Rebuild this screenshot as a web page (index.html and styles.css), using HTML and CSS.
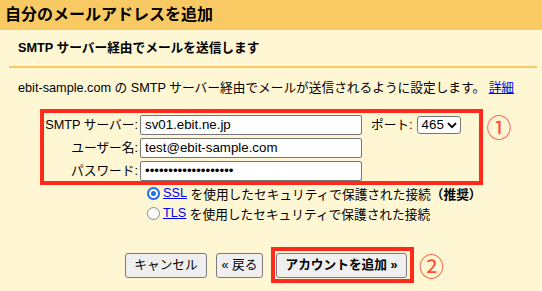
FILE: index.html
```html
<!DOCTYPE html>
<html lang="ja">
<head>
<meta charset="utf-8">
<title>自分のメールアドレスを追加</title>
<link rel="stylesheet" href="styles.css">
</head>
<body>
<header class="top"><h1 class="title">自分のメールアドレスを追加</h1></header>
<main class="panel">
  <h2 class="sub">SMTP サーバー経由でメールを送信します</h2>
  <p class="desc">ebit-sample.com の SMTP サーバー経由でメールが送信されるように設定します。 <a class="link" href="#">詳細</a></p>
  <div class="form-row">
    <div class="mark-box">
      <div class="grid">
        <label class="lbl">SMTP サーバー:</label>
        <div class="field">sv01.ebit.ne.jp</div>
        <div class="port">
          <span class="port-lbl">ポート:</span>
          <span class="select">465<svg class="chev" width="10" height="7" viewBox="0 0 10 7"><path d="M1 1.2 L5 5.2 L9 1.2" fill="none" stroke="#000" stroke-width="1.8"/></svg></span>
        </div>
        <label class="lbl">ユーザー名:</label>
        <div class="field">test@ebit-sample.com</div>
        <span class="empty"></span>
        <label class="lbl">パスワード:</label>
        <div class="field pw">•••••••••••••••••••</div>
        <span class="empty"></span>
      </div>
    </div>
    <span class="num num1">①</span>
  </div>
  <div class="radios">
    <div class="radio-row"><span class="radio on"></span><a class="link" href="#">SSL</a>&nbsp;を使用したセキュリティで保護された接続 <b class="rec">（推奨）</b></div>
    <div class="radio-row"><span class="radio"></span><a class="link" href="#">TLS</a>&nbsp;を使用したセキュリティで保護された接続</div>
  </div>
  <div class="buttons">
    <button class="btn cancel">キャンセル</button>
    <button class="btn back">« 戻る</button>
    <span class="mark-btn"><button class="btn add">アカウントを追加 »</button></span>
    <span class="num num2">②</span>
  </div>
</main>
</body>
</html>
```
FILE: styles.css
```css
* { box-sizing: border-box; }
html, body { margin: 0; padding: 0; }
body {
  width: 542px;
  height: 291px;
  overflow: hidden;
  background: #fff6d4;
  font-family: "Liberation Sans", "Noto Sans CJK JP", sans-serif;
  font-size: 12.7px;
  color: #000;
}
.top {
  height: 30px;
  background: #f9ca63;
  padding-left: 5px;
}
.title {
  margin: 0;
  font-size: 16px;
  font-weight: bold;
  line-height: 30px;
}
.panel {
  margin: 0 5px 0 9px;
}
.sub {
  margin: 0;
  height: 38px;
  line-height: 36px;
  padding-left: 9px;
  font-size: 12.7px;
  font-weight: bold;
  border-bottom: 2px solid #f9ca63;
}
.desc {
  margin: 12px 0 0 0;
  padding-left: 9px;
  line-height: 16px;
}
.link { color: #0000ee; text-decoration: underline; }
.form-row {
  display: flex;
  align-items: flex-start;
  margin: 13px 0 0 31px;
}
.mark-box {
  border: 4px solid #fe2a1c;
  padding: 2px 18px 0 0;
  height: 76px;
}
.grid {
  display: grid;
  grid-template-columns: 96px 222px auto;
  grid-auto-rows: 20px;
  row-gap: 3px;
}
.lbl {
  text-align: right;
  padding-right: 2px;
  line-height: 20px;
  white-space: nowrap;
}
.field {
  background: #fff;
  border: 1px solid #767676;
  border-radius: 2px;
  height: 20px;
  line-height: 18px;
  padding-left: 4px;
  font-size: 13.3px;
  white-space: nowrap;
  overflow: hidden;
}
.port {
  display: flex;
  align-items: center;
  margin-left: 9px;
  gap: 4px;
}
.port-lbl { line-height: 20px; }
.select {
  display: inline-flex;
  align-items: center;
  gap: 3px;
  height: 18px;
  width: 44px;
  padding-left: 4px;
  background: #fff;
  border: 1px solid #767676;
  border-radius: 3px;
  line-height: 16px;
  font-size: 13.3px;
}
.chev { display: block; }
.num {
  color: #ff4d2e;
  font-family: "Noto Sans CJK JP", sans-serif;
  font-size: 25px;
  line-height: 24px;
}
.num1 { margin: 5px 0 0 4px; }
.num2 { margin-left: 5px; }
.radios {
  margin: -1px 0 0 138px;
  display: flex;
  flex-direction: column;
  gap: 2px;
}
.radio-row {
  display: flex;
  align-items: center;
  height: 18px;
  white-space: nowrap;
}
.radio {
  width: 13px;
  height: 13px;
  border-radius: 50%;
  border: 1px solid #8a8a8a;
  background: #fff;
  margin-right: 3px;
  flex: none;
}
.radio.on {
  border: none;
  background: #1b6ff0;
  box-shadow: inset 0 0 0 2px #1b6ff0, inset 0 0 0 4px #fff;
}
.rec { font-weight: bold; }
.buttons {
  display: flex;
  align-items: center;
  margin: 25px 0 0 116px;
}
.btn {
  font-family: "Liberation Sans", "Noto Sans CJK JP", sans-serif;
  font-size: 12.7px;
  color: #000;
  background: #efefef;
  border: 1px solid #7a7a7a;
  border-radius: 3px;
  height: 25px;
  padding: 0 7px;
  line-height: 23px;
  white-space: nowrap;
}
.cancel { width: 82px; margin-right: 9px; }
.back { width: 47px; padding: 0 4px; margin-right: 8px; }
.mark-btn {
  display: inline-flex;
  border: 4px solid #fe2a1c;
  padding: 2px 3px 1px 1px;
}
.add { width: 131px; font-weight: bold; }
```
